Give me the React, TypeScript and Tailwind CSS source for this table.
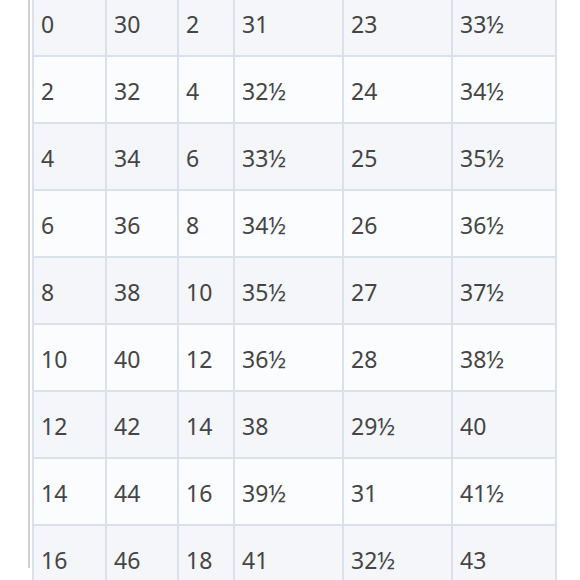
const rows: string[][] = [
  ['0', '30', '2', '31', '23', '33½'],
  ['2', '32', '4', '32½', '24', '34½'],
  ['4', '34', '6', '33½', '25', '35½'],
  ['6', '36', '8', '34½', '26', '36½'],
  ['8', '38', '10', '35½', '27', '37½'],
  ['10', '40', '12', '36½', '28', '38½'],
  ['12', '42', '14', '38', '29½', '40'],
  ['14', '44', '16', '39½', '31', '41½'],
  ['16', '46', '18', '41', '32½', '43'],
];

const widths = ['w-[73px]', 'w-[72px]', 'w-[56px]', 'w-[109px]', 'w-[109px]', 'w-[104px]'];

export default function App() {
  return (
    <div className="w-[580px] h-[580px] overflow-hidden bg-white">
      <div className="ml-[28px] h-full border-l-2 border-[#d0d0d0] pl-[2px]">
        <table
          className="mt-[-12px] border-collapse text-[23px] text-[#454545]"
          style={{ fontFamily: '"Noto Sans", "DejaVu Sans", sans-serif' }}
        >
          <tbody>
            {rows.map((row, i) => (
              <tr key={i} className={i % 2 === 0 ? 'bg-[#f4f6fa]' : 'bg-[#fbfcfe]'}>
                {row.map((cell, j) => (
                  <td
                    key={j}
                    className={`${widths[j]} h-[67px] border-2 border-[#dbe1ea] pl-[7px] pt-[4px] align-middle leading-none`}
                  >
                    {cell}
                  </td>
                ))}
              </tr>
            ))}
          </tbody>
        </table>
      </div>
    </div>
  );
}
